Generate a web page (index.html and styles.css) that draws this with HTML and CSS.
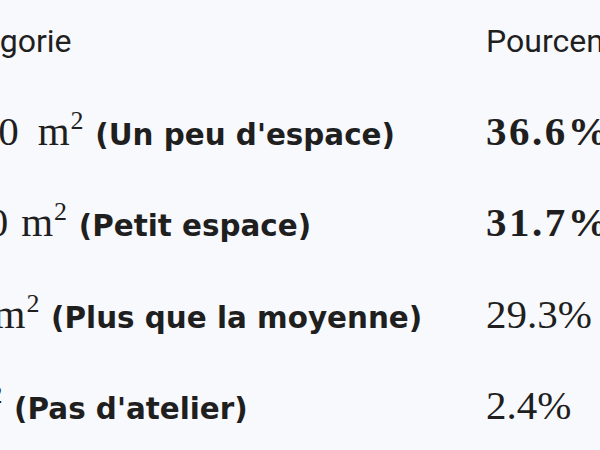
FILE: index.html
```html
<!DOCTYPE html>
<html lang="fr">
<head>
<meta charset="utf-8">
<link rel="stylesheet" href="styles.css">
</head>
<body>
<div class="view">
  <div class="table">
    <div class="row head">
      <div class="cell cat">Catégorie</div>
      <div class="cell pct">Pourcentage</div>
    </div>
    <div class="row">
      <div class="cell cat"><span class="math">30-50<span class="sp wide"></span>m<sup>2</sup></span> <b>(Un peu d'espace)</b></div>
      <div class="cell pct"><span class="math bold">36.6%</span></div>
    </div>
    <div class="row">
      <div class="cell cat"><span class="math">&lt;<span class="rel"></span>30<span class="sp"></span>m<sup>2</sup></span> <b>(Petit espace)</b></div>
      <div class="cell pct"><span class="math bold">31.7%</span></div>
    </div>
    <div class="row">
      <div class="cell cat"><span class="math">100<span class="sp tight"></span>m<sup>2</sup></span> <b>(Plus que la moyenne)</b></div>
      <div class="cell pct"><span class="math">29.3%</span></div>
    </div>
    <div class="row">
      <div class="cell cat"><span class="math">0<span class="sp"></span>m<sup>2</sup></span> <b>(Pas d'atelier)</b></div>
      <div class="cell pct"><span class="math">2.4%</span></div>
    </div>
  </div>
</div>
</body>
</html>
```
FILE: styles.css
```css
html, body {
  margin: 0;
  padding: 0;
  background: #f8f9fc;
}
.view {
  width: 600px;
  height: 450px;
  overflow: hidden;
}
.table {
  margin-left: -77px;
  display: flex;
  flex-direction: column;
  font-family: Roboto, "Liberation Sans", sans-serif;
  color: #1f1f1f;
}
.row {
  display: grid;
  grid-template-columns: 563px auto;
  height: 91.5px;
  white-space: nowrap;
}
.head {
  margin-top: -5px;
  height: 89.5px;
}
.cell {
  font-size: 31px;
  line-height: 92px;
}
.head .cell {
  font-size: 32px;
  color: #1f1f1f;
}
.head .cat {
  padding-left: 11px;
}
.cat b {
  font-family: "DejaVu Sans", sans-serif;
  font-weight: 700;
  font-size: 29.4px;
}
.math {
  font-family: "Liberation Serif", serif;
  font-size: 41px;
  margin-right: 4px;
}
.math sup {
  font-size: 26px;
  line-height: 0;
  vertical-align: 16px;
  margin-left: 1px;
}
.math.bold {
  font-weight: 700;
  letter-spacing: 2.5px;
}
.sp {
  display: inline-block;
  width: 13px;
}
.sp.wide {
  width: 19px;
}
.sp.tight {
  width: 9px;
}
.rel {
  display: inline-block;
  width: 21px;
}
```
